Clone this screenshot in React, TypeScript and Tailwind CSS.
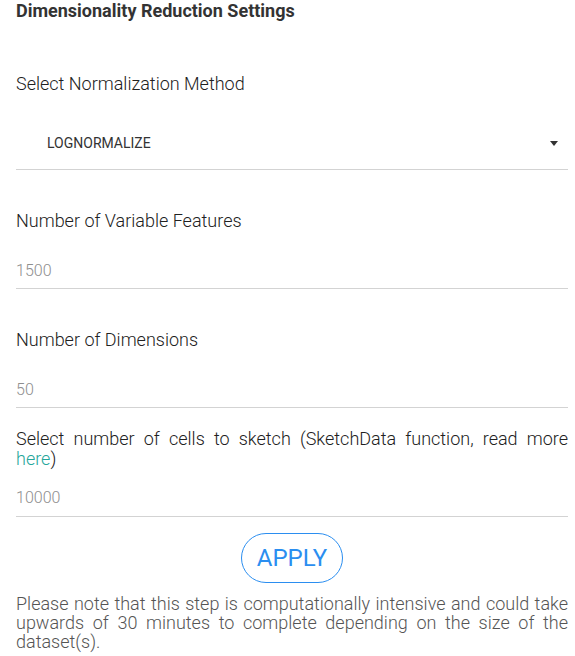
const font = { fontFamily: 'Roboto, "Noto Sans", sans-serif' };

function Field({ label, value }: { label: React.ReactNode; value: string }) {
  return (
    <div>
      <div className="mt-[39px] text-[18px] font-light leading-[24px] text-[#212121]">{label}</div>
      <div className="mt-[26px] border-b border-[#d3d3d3] pb-[5px] text-[16px] font-light leading-[24px] text-[#8e8e8e]">
        {value}
      </div>
    </div>
  );
}

export default function App() {
  return (
    <div className="min-h-screen bg-white pl-4 pr-[7px]" style={font}>
      <h2 className="text-[18px] font-bold leading-[21px] text-[#333]">Dimensionality Reduction Settings</h2>

      <div className="mt-[51px] text-[18px] font-light leading-[24px] text-[#212121]">
        Select Normalization Method
      </div>
      <div className="mt-[35px] flex items-center justify-between border-b border-[#d3d3d3] pb-[14px] pl-[31px] pr-[10px]">
        <span className="text-[14px] font-normal leading-[24px] text-[#333]">LOGNORMALIZE</span>
        <svg width="8" height="5" viewBox="0 0 8 5" className="text-[#333]">
          <path d="M0 0h8L4 5z" fill="currentColor" />
        </svg>
      </div>

      <Field label="Number of Variable Features" value="1500" />
      <Field label="Number of Dimensions" value="50" />

      <div className="mt-[21px] text-justify text-[18px] font-light leading-[20px] text-[#212121]">
        Select number of cells to sketch (SketchData function, read more{' '}
        <a href="#" className="text-[#26a69a]">here</a>)
      </div>
      <div className="mt-[17px] border-b border-[#d3d3d3] pb-[6px] text-[16px] font-light leading-[24px] text-[#8e8e8e]">
        10000
      </div>

      <div className="mt-[16px] flex justify-center">
        <button className="h-[50px] w-[102px] rounded-full border border-[#2b8ef0] text-[24px] font-normal text-[#2b8ef0]">
          APPLY
        </button>
      </div>

      <p className="mt-[11px] text-justify text-[18px] font-light leading-[19px] text-[#555]">
        Please note that this step is computationally intensive and could take upwards of 30 minutes to
        complete depending on the size of the dataset(s).
      </p>
    </div>
  );
}
